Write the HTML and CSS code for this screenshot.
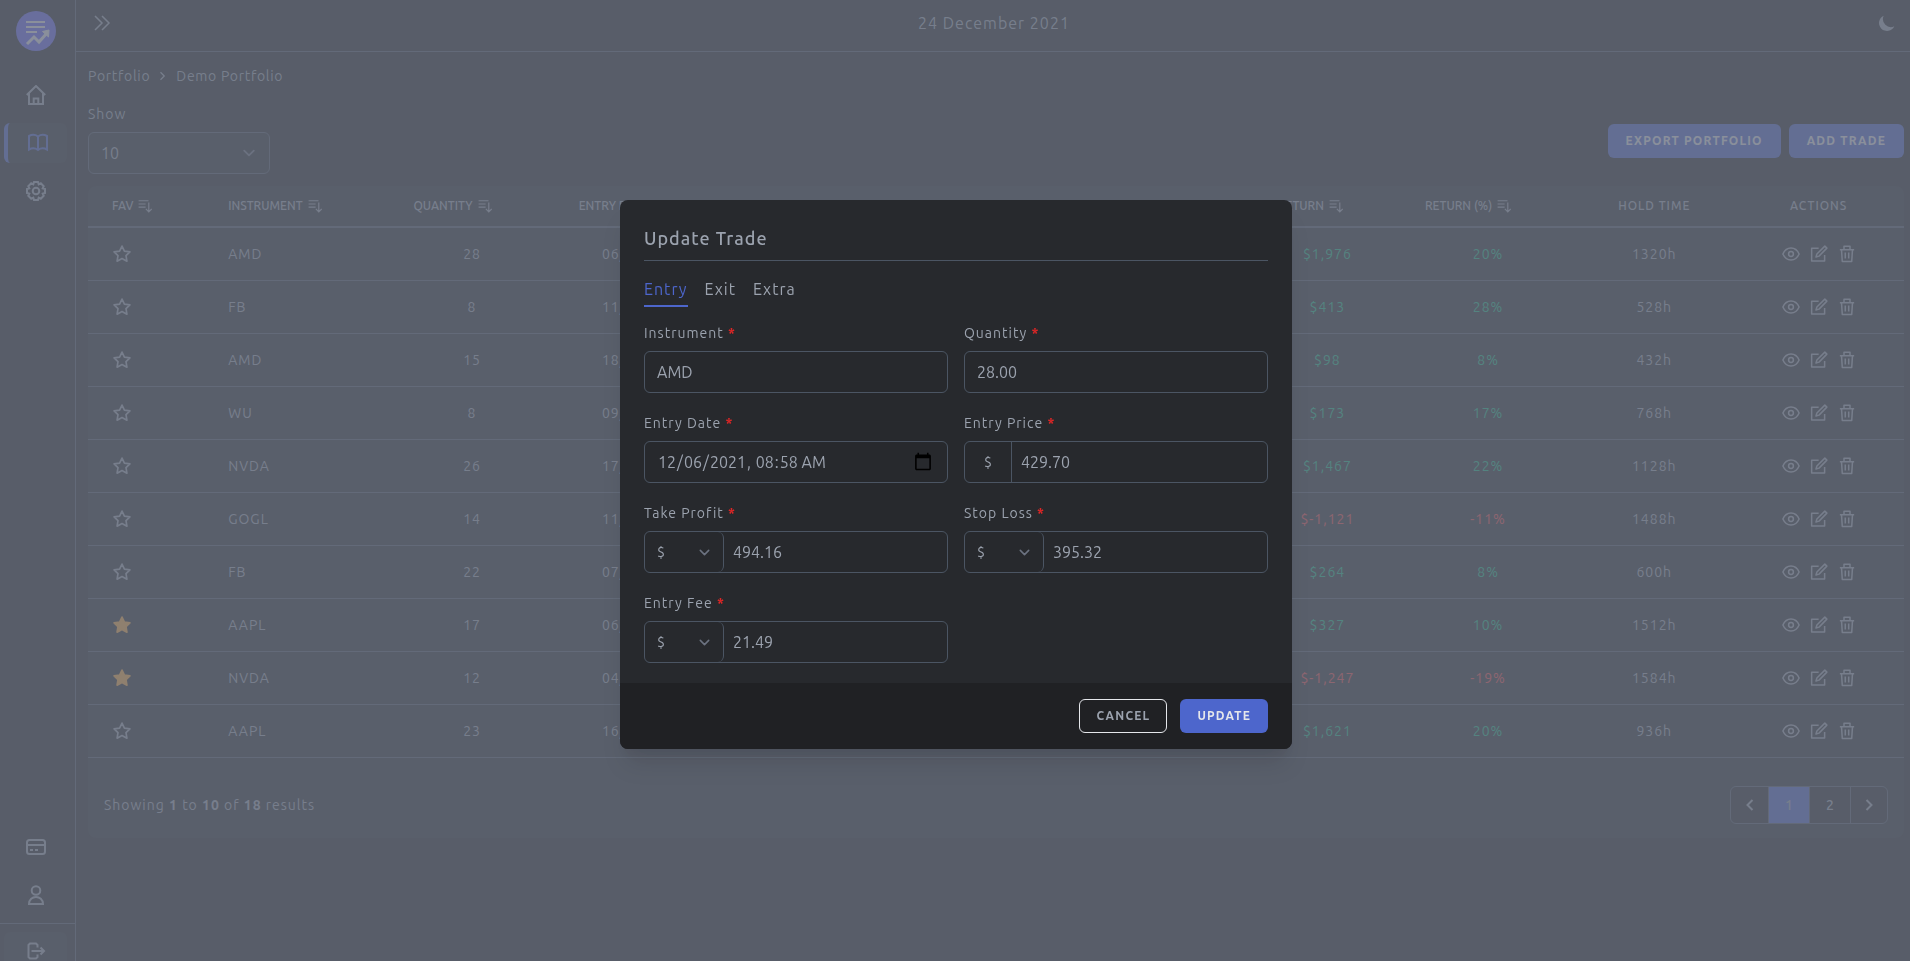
FILE: index.html
```html
<!DOCTYPE html>
<html lang="en">
<head>
<meta charset="utf-8">
<title>Demo Portfolio</title>
<link rel="stylesheet" href="styles.css">
</head>
<body>
<svg class="sprite" aria-hidden="true">
  <symbol id="sort" viewBox="0 0 24 24"><path d="M1 3h17M1 8.500h12M1 14h12M18.500 6v16M13.500 17l5 5 5-5"/></symbol>
  <symbol id="star" viewBox="0 0 24 24"><path d="M12 2.500L14.900 8.500 21.500 9.400 16.800 14 17.900 20.600 12 17.500 6.100 20.600 7.200 14 2.500 9.400 9.100 8.500z"/></symbol>
  <symbol id="eye" viewBox="0 0 24 24"><path d="M12 4c5 0 8.500 2.800 10.800 8-2.300 5.200-5.800 8-10.800 8S3.500 17.200 1.200 12C3.500 6.800 7 4 12 4z"/><circle cx="12" cy="12" r="3.200"/></symbol>
  <symbol id="edit" viewBox="0 0 24 24"><path d="M11.500 4.400H2.200V21.300H19.500V13.300M19.800 1.500l2.700 2.700L12 14.800 8 16l1.200-4z"/></symbol>
  <symbol id="trash" viewBox="0 0 24 24"><path d="M2.500 6.200h19M8 6V1.500h8V6M4.700 6.500l1 15.500h12.600l1-15.500M9.700 10v8M14.300 10v8"/></symbol>
</svg>

<div class="app">
  <aside class="sidebar">
    <a class="logo" href="#" aria-label="Dashboard"><svg viewBox="0 0 40 40"><circle cx="20" cy="20" r="20"/><path class="lines" d="M10 11h19M10 16h19M10 21h11"/><path class="trend" d="M11 33l7-7 5 5 8-9"/><path class="head" d="M33 19l-.5 7-6-5.500z"/></svg></a>
    <nav class="nav">
      <a class="nav-item" href="#" aria-label="Home"><svg viewBox="0 0 20 20"><path d="M0.800 10L10 1l9.200 9M3 8.500V19h14V8.500M7.700 19v-5.500h4.600V19"/></svg></a>
      <a class="nav-item active" href="#" aria-label="Portfolio"><svg viewBox="0 0 20 20"><path d="M10 3.500C7.500 1.700 3.500 1.700 1 3v13.500c2.500-1.300 6.500-1.300 9 .5 2.500-1.800 6.500-1.800 9-.5V3c-2.500-1.300-6.500-1.300-9 .5zM10 3.500V17"/></svg></a>
      <a class="nav-item" href="#" aria-label="Settings"><svg viewBox="0 0 20 20"><circle cx="10" cy="10" r="3.300"/><path d="M8 1h4l.7 2.300 2.100-1 2.900 2.900-1 2.100L19 8v4l-2.300.7 1 2.100-2.900 2.900-2.100-1L12 19H8l-.7-2.300-2.100 1-2.900-2.900 1-2.100L1 12V8l2.300-.7-1-2.100 2.900-2.900 2.100 1z"/></svg></a>
    </nav>
    <nav class="nav nav-bottom">
      <a class="nav-item" href="#" aria-label="Billing"><svg viewBox="0 0 20 20"><rect x="1" y="3" width="18" height="14" rx="2.500"/><path d="M1 8h18M4 13h3M9 13h3"/></svg></a>
      <a class="nav-item" href="#" aria-label="Profile"><svg viewBox="0 0 20 20"><circle cx="10" cy="5.500" r="4.300"/><path d="M3 19c0-9.500 14-9.500 14 0z"/></svg></a>
    </nav>
    <div class="logout"><button class="nav-item filled" type="button" aria-label="Log out"><svg viewBox="0 0 20 20"><path d="M11.500 5.500V3L10 1.500H4L2.500 3v12L4 16.500h6l1.500-1.500V12.500M5.500 9H18M14.500 5.500L18 9l-3.500 3.500"/></svg></button></div>
  </aside>

  <div class="content">
    <header class="topbar">
      <button class="icon-button" type="button" aria-label="Expand menu"><svg viewBox="0 0 18 18"><path d="M2 2l7 7-7 7M9 2l7 7-7 7"/></svg></button>
      <span class="today">24 December 2021</span>
      <button class="icon-button" type="button" aria-label="Dark mode"><svg class="moon" viewBox="0 0 20 20"><path d="M17.300 13.300A8 8 0 0 1 6.700 2.700a8 8 0 1 0 10.600 10.600z"/></svg></button>
    </header>

    <main class="page">
      <nav class="breadcrumb" aria-label="Breadcrumb"><a href="#">Portfolio</a><svg viewBox="0 0 8 8"><path d="M2 1l3 3-3 3"/></svg><a href="#">Demo Portfolio</a></nav>

      <div class="toolbar">
        <div class="show">
          <label for="show">Show</label>
          <select id="show"><option>10</option></select>
        </div>
        <div class="buttons">
          <button class="button primary" type="button">Export Portfolio</button>
          <button class="button primary" type="button">Add Trade</button>
        </div>
      </div>

      <section class="card">
        <table class="trades">
          <colgroup><col class="c-fav"><col class="c-name"><col class="c-qty"><col class="c-date"><col class="c-rest"><col class="c-ret"><col class="c-pct"><col class="c-hold"><col class="c-act"></colgroup>
          <thead>
            <tr>
              <th><button class="sort" type="button">FAV<svg><use href="#sort"/></svg></button></th>
              <th><button class="sort" type="button">INSTRUMENT<svg><use href="#sort"/></svg></button></th>
              <th><button class="sort" type="button">QUANTITY<svg><use href="#sort"/></svg></button></th>
              <th><button class="sort" type="button">ENTRY DATE</button></th>
              <th></th>
              <th><button class="sort" type="button">RETURN<svg><use href="#sort"/></svg></button></th>
              <th><button class="sort" type="button">RETURN (%)<svg><use href="#sort"/></svg></button></th>
              <th class="plain">HOLD TIME</th>
              <th class="plain">ACTIONS</th>
            </tr>
          </thead>
          <tbody>
            <tr><td><svg class="star"><use href="#star"/></svg></td><td>AMD</td><td>28</td><td>06/12/2021</td><td></td><td class="up">$1,976</td><td class="up">20%</td><td>1320h</td><td><span class="actions"><svg><use href="#eye"/></svg><svg><use href="#edit"/></svg><svg><use href="#trash"/></svg></span></td></tr>
            <tr><td><svg class="star"><use href="#star"/></svg></td><td>FB</td><td>8</td><td>11/12/2021</td><td></td><td class="up">$413</td><td class="up">28%</td><td>528h</td><td><span class="actions"><svg><use href="#eye"/></svg><svg><use href="#edit"/></svg><svg><use href="#trash"/></svg></span></td></tr>
            <tr><td><svg class="star"><use href="#star"/></svg></td><td>AMD</td><td>15</td><td>18/12/2021</td><td></td><td class="up">$98</td><td class="up">8%</td><td>432h</td><td><span class="actions"><svg><use href="#eye"/></svg><svg><use href="#edit"/></svg><svg><use href="#trash"/></svg></span></td></tr>
            <tr><td><svg class="star"><use href="#star"/></svg></td><td>WU</td><td>8</td><td>09/12/2021</td><td></td><td class="up">$173</td><td class="up">17%</td><td>768h</td><td><span class="actions"><svg><use href="#eye"/></svg><svg><use href="#edit"/></svg><svg><use href="#trash"/></svg></span></td></tr>
            <tr><td><svg class="star"><use href="#star"/></svg></td><td>NVDA</td><td>26</td><td>17/12/2021</td><td></td><td class="up">$1,467</td><td class="up">22%</td><td>1128h</td><td><span class="actions"><svg><use href="#eye"/></svg><svg><use href="#edit"/></svg><svg><use href="#trash"/></svg></span></td></tr>
            <tr><td><svg class="star"><use href="#star"/></svg></td><td>GOGL</td><td>14</td><td>11/12/2021</td><td></td><td class="down">$-1,121</td><td class="down">-11%</td><td>1488h</td><td><span class="actions"><svg><use href="#eye"/></svg><svg><use href="#edit"/></svg><svg><use href="#trash"/></svg></span></td></tr>
            <tr><td><svg class="star"><use href="#star"/></svg></td><td>FB</td><td>22</td><td>07/12/2021</td><td></td><td class="up">$264</td><td class="up">8%</td><td>600h</td><td><span class="actions"><svg><use href="#eye"/></svg><svg><use href="#edit"/></svg><svg><use href="#trash"/></svg></span></td></tr>
            <tr><td><svg class="star on"><use href="#star"/></svg></td><td>AAPL</td><td>17</td><td>06/12/2021</td><td></td><td class="up">$327</td><td class="up">10%</td><td>1512h</td><td><span class="actions"><svg><use href="#eye"/></svg><svg><use href="#edit"/></svg><svg><use href="#trash"/></svg></span></td></tr>
            <tr><td><svg class="star on"><use href="#star"/></svg></td><td>NVDA</td><td>12</td><td>04/12/2021</td><td></td><td class="down">$-1,247</td><td class="down">-19%</td><td>1584h</td><td><span class="actions"><svg><use href="#eye"/></svg><svg><use href="#edit"/></svg><svg><use href="#trash"/></svg></span></td></tr>
            <tr><td><svg class="star"><use href="#star"/></svg></td><td>AAPL</td><td>23</td><td>16/12/2021</td><td></td><td class="up">$1,621</td><td class="up">20%</td><td>936h</td><td><span class="actions"><svg><use href="#eye"/></svg><svg><use href="#edit"/></svg><svg><use href="#trash"/></svg></span></td></tr>
          </tbody>
        </table>
        <footer class="card-footer">
          <p>Showing <b>1</b> to <b>10</b> of <b>18</b> results</p>
          <nav class="pager" aria-label="Pagination">
            <button type="button" aria-label="Previous"><svg viewBox="0 0 20 20"><path d="M12.500 5l-5 5 5 5"/></svg></button>
            <button class="current" type="button">1</button>
            <button type="button">2</button>
            <button type="button" aria-label="Next"><svg viewBox="0 0 20 20"><path d="M7.500 5l5 5-5 5"/></svg></button>
          </nav>
        </footer>
      </section>
    </main>
  </div>
</div>

<div class="overlay">
  <form class="modal" role="dialog" aria-labelledby="modal-title">
    <div class="modal-body">
      <h2 id="modal-title">Update Trade</h2>
      <div class="tabs">
        <button class="tab selected" type="button">Entry</button>
        <button class="tab" type="button">Exit</button>
        <button class="tab" type="button">Extra</button>
      </div>
      <div class="fields">
        <div class="field"><label for="instrument">Instrument <i>*</i></label><input class="box" id="instrument" value="AMD"></div>
        <div class="field"><label for="quantity">Quantity <i>*</i></label><input class="box" id="quantity" value="28.00"></div>
        <div class="field"><label for="date">Entry Date <i>*</i></label><input class="box" id="date" type="datetime-local" value="2021-12-06T08:58"></div>
        <div class="field"><label for="price">Entry Price <i>*</i></label><div class="box group"><span class="unit">$</span><input id="price" value="429.70"></div></div>
        <div class="field"><label for="profit">Take Profit <i>*</i></label><div class="box group"><select aria-label="Take profit unit"><option>$</option></select><input id="profit" value="494.16"></div></div>
        <div class="field"><label for="loss">Stop Loss <i>*</i></label><div class="box group"><select aria-label="Stop loss unit"><option>$</option></select><input id="loss" value="395.32"></div></div>
        <div class="field"><label for="fee">Entry Fee <i>*</i></label><div class="box group"><select aria-label="Entry fee unit"><option>$</option></select><input id="fee" value="21.49"></div></div>
      </div>
    </div>
    <div class="modal-footer">
      <button class="button outline" type="button">Cancel</button>
      <button class="button primary" type="submit">Update</button>
    </div>
  </form>
</div>
</body>
</html>
```
FILE: styles.css
```css
:root {
  --bg: #202124;
  --card: #27292d;
  --line: #4b5563;
  --text: #9ca3af;
  --accent: #4d66cc;
  --chevron: url("data:image/svg+xml,%3Csvg xmlns='http://www.w3.org/2000/svg' fill='none' viewBox='0 0 20 20'%3E%3Cpath stroke='%236b7280' stroke-linecap='round' stroke-linejoin='round' stroke-width='1.5' d='M6 8l4 4 4-4'/%3E%3C/svg%3E");
}
* { box-sizing: border-box; }
body {
  margin: 0;
  background: var(--bg);
  color: var(--text);
  font: 14px/20px Ubuntu, "Noto Sans", sans-serif;
  letter-spacing: 1px;
  overflow: hidden;
}
button, input, select { font: inherit; color: inherit; margin: 0; }
button { letter-spacing: inherit; background: none; border: 0; padding: 0; cursor: pointer; }
a { color: inherit; text-decoration: none; }
svg { fill: none; stroke: currentColor; display: block; flex: none; }
select { appearance: none; }
.sprite { position: absolute; width: 0; height: 0; }

.app { display: flex; height: 100vh; }
.sidebar {
  display: flex;
  flex-direction: column;
  flex: none;
  width: 76px;
  border-right: 1px solid var(--line);
  overflow: hidden;
}
.logo { padding: 11px 0 0 16px; }
.logo svg { width: 40px; height: 40px; }
.logo circle { fill: #6366f1; stroke: none; }
.logo .lines { stroke: #e5e7eb; stroke-width: 2; }
.logo .trend { stroke: #e5e7eb; stroke-width: 3; }
.logo .head { fill: #e5e7eb; stroke: #e5e7eb; }
.nav { display: flex; flex-direction: column; gap: 8px; padding: 24px 8px 0 4px; }
.nav-bottom { margin-top: auto; padding: 0 8px 8px 4px; }
.nav-item { display: flex; align-items: center; justify-content: center; height: 40px; border-radius: 6px; }
.nav-item svg { width: 20px; height: 20px; stroke-width: 2; }
.nav-item.active { border-left: 4px solid var(--accent); background: var(--card); color: var(--accent); }
.nav-item.filled { width: 100%; background: var(--card); }
.logout { flex: none; height: 38px; padding: 8px 8px 0 4px; border-top: 1px solid var(--line); }

.content { flex: 1; min-width: 0; }
.topbar {
  display: flex;
  align-items: center;
  justify-content: space-between;
  height: 52px;
  padding: 0 13px 6px 17px;
  border-bottom: 1px solid var(--line);
  font-size: 16px;
}
.icon-button svg { width: 18px; height: 18px; stroke-width: 1.5; }
.icon-button .moon { width: 20px; height: 20px; fill: currentColor; stroke: none; }
.page { padding: 14px 6px 0 12px; }
.breadcrumb { display: flex; align-items: center; gap: 8px; letter-spacing: 0.05em; }
.breadcrumb svg { width: 10px; height: 10px; stroke-width: 1; }

.toolbar { display: flex; align-items: center; justify-content: space-between; padding-top: 18px; }
.show { display: flex; flex-direction: column; gap: 8px; width: 182px; }
.show select {
  height: 42px;
  padding: 0 12px;
  border: 1px solid var(--line);
  border-radius: 6px;
  background: var(--card) var(--chevron) right 8px center / 24px no-repeat;
  font-size: 16px;
}
.buttons { display: flex; gap: 8px; padding-top: 4px; }
.button {
  height: 34px;
  padding: 0 16px;
  border: 1px solid transparent;
  border-radius: 6px;
  font-size: 12px;
  font-weight: 700;
  letter-spacing: 0.1em;
  text-transform: uppercase;
}
.buttons .button { padding: 0 17px; }
.primary { background: var(--accent); color: #e5e7eb; }
.outline { border-color: #e5e7eb; }

.card { margin-top: 12px; background: var(--card); border-radius: 8px; }
.trades { width: 100%; table-layout: fixed; border-collapse: collapse; }
.c-fav { width: 6.4%; }
.c-name { width: 10.2%; }
.c-qty { width: 9.1%; }
.c-date { width: 9.8%; }
.c-rest { width: 28.7%; }
.c-ret { width: 8.1%; }
.c-pct { width: 9.6%; }
.c-hold { width: 8.7%; }
.c-act { width: 9.4%; }
th { height: 41px; padding: 0 0 0 24px; border-bottom: 2px solid var(--line); font-size: 12px; font-weight: 500; text-align: left; }
th.plain { padding: 0; text-align: center; }
.sort { display: flex; align-items: center; gap: 5px; letter-spacing: 0; white-space: nowrap; }
.sort svg { width: 14px; height: 14px; stroke-width: 2; }
td { height: 53px; padding: 0; border-bottom: 1px solid var(--line); text-align: center; }
td:nth-child(-n+2) { padding-left: 24px; text-align: left; }
.star { width: 20px; height: 20px; stroke-width: 2; stroke-linejoin: round; }
.star.on { color: #fbaa3c; fill: #fbaa3c; }
.up { color: #10b981; }
.down { color: #ef4444; }
.actions { display: flex; justify-content: center; gap: 10px; }
.actions svg { width: 18px; height: 18px; stroke-width: 2; stroke-linejoin: round; }
.card-footer { display: flex; align-items: center; justify-content: space-between; padding: 28px 16px 14px; }
.card-footer p { margin: 0; }
.card-footer b { font-weight: 600; }
.pager { display: flex; border: 1px solid var(--line); border-radius: 6px; background: var(--bg); overflow: hidden; }
.pager button { display: flex; align-items: center; justify-content: center; width: 41px; height: 36px; font-weight: 500; letter-spacing: 0; }
.pager button:first-child, .pager button:last-child { width: 37px; }
.pager button + button { border-left: 1px solid var(--line); }
.pager svg { width: 20px; height: 20px; stroke-width: 2; }
.pager .current { background: var(--accent); }

.overlay {
  position: fixed;
  inset: 0;
  display: flex;
  align-items: center;
  justify-content: center;
  padding: 0 0 12px 2px;
  background: rgb(107 114 128 / 75%);
}
.modal { width: 672px; border-radius: 8px; background: #27292d; overflow: hidden; box-shadow: 0 20px 25px -5px rgb(0 0 0 / 10%), 0 10px 10px -5px rgb(0 0 0 / 4%); }
.modal-body { padding: 24px 24px 20px; }
h2 { margin: 0; padding-bottom: 8px; border-bottom: 1px solid var(--line); font-size: 18px; line-height: 28px; font-weight: 500; }
.tabs { display: flex; gap: 17px; padding-top: 16px; }
.tab { padding-bottom: 4px; border-bottom: 2px solid transparent; font-size: 16px; line-height: 24px; }
.tab.selected { color: var(--accent); border-color: var(--accent); }
.fields { display: grid; grid-template-columns: repeat(2, minmax(0, 1fr)); gap: 20px 16px; padding-top: 16px; }
.field { display: flex; flex-direction: column; gap: 8px; min-width: 0; }
.field i { color: #dc2626; font-style: normal; font-weight: 700; }
.box { width: 100%; height: 42px; padding: 0 12px; border: 1px solid var(--line); border-radius: 6px; background: none; font-size: 16px; letter-spacing: 0; }
.box::-webkit-calendar-picker-indicator { width: 20px; height: 20px; }
.group { display: flex; padding: 0; }
.group input { flex: 1; min-width: 0; padding: 0 9px; border: 0; background: none; }
.unit { display: flex; align-items: center; justify-content: center; width: 47px; border-right: 1px solid var(--line); font-size: 14px; }
.group select { width: 79px; padding: 0 12px; border: 0; border-right: 1px solid var(--line); border-radius: 6px; background: var(--chevron) right 8px center / 21px no-repeat; font-size: 14px; }
.modal-footer { display: flex; justify-content: flex-end; gap: 13px; padding: 16px 24px; background: #202124; }
```
